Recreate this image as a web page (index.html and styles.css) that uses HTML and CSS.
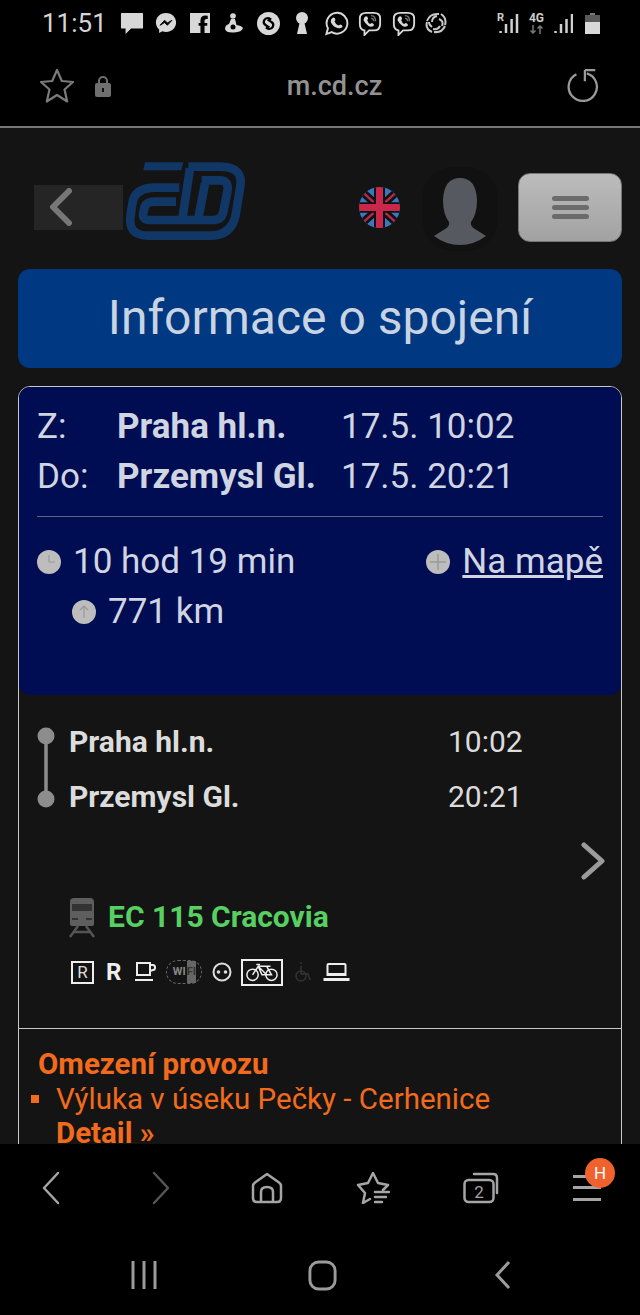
FILE: index.html
```html
<!DOCTYPE html>
<html lang="cs">
<head>
<meta charset="utf-8">
<title>Informace o spojení</title>
<link rel="stylesheet" href="styles.css">
</head>
<body>
<div class="phone">
  <header class="status">
    <span class="clock">11:51</span>
    <div class="notifs">
      <svg width="24" height="23" viewBox="0 0 26 25"><path class="fill" d="M2 1h22q1 0 1 1v15q0 1-1 1H12l-6 6v-6H2q-1 0-1-1V2q0-1 1-1z"/></svg>
      <svg width="22" height="22" viewBox="0 0 24 24"><path class="fill" d="M12 1C5 1 1 6 1 11.500c0 3 1.200 5.500 3.500 7.500v4l3.500-2q2 .7 4 .7c7 0 11-5 11-10.200S19 1 12 1z"/><path d="M5.500 14.500l5-5.500 3 3 5-3-5 5.500-3-3z" fill="#000" stroke="#000"/></svg>
      <svg width="20" height="20" viewBox="0 0 22 22"><path class="fill" d="M0 0h22v22h-6v-8h3v-3h-3V8.500q0-2 2-2h1.500V3q-8-1.200-8 5v3h-2v3h2v8H0z"/></svg>
      <svg width="18" height="20" viewBox="0 0 18 20"><circle class="fill" cx="8" cy="3" r="2.800"/><path class="fill" d="M6 6h4l1.500 6q5 .5 6.500 3-1 4-9 4.500T0 16q0-4 4-5z"/><circle cx="8" cy="14" r="2.500" fill="#000"/></svg>
      <svg width="23" height="23" viewBox="0 0 26 26"><circle class="fill" cx="13" cy="13" r="13"/><path d="M16 8.500l-2.500-1.500Q10 6 8 9.500q-1.500 3.500 2 5.500l4 2.500M10 17.500l2.500 1.500Q16 20 18 16.500q1.500-3.500-2-5.500l-4-2.500" fill="none" stroke="#000" stroke-width="2.500"/></svg>
      <svg width="14" height="22" viewBox="0 0 14 22"><circle class="fill" cx="7" cy="6" r="6"/><path class="fill" d="M5 9h4l3 13H2z"/></svg>
      <svg width="25" height="25" viewBox="0 0 26 26"><path d="M2.500 24l1.600-6A10.800 10.800 0 1 1 8 22z" fill="none" stroke="#d8d8d8" stroke-width="2"/><path class="fill" d="M9 7q2-1 3 2l-1 2q1 3 4 4l2-1q3 1 2 3-3 2-7 0t-5-6q0-3 2-4z"/></svg>
      <svg width="24" height="25" viewBox="0 0 26 27"><path d="M7 21q-5-1-5-7V8q0-6 7-6h8q7 0 7 6v6q0 7-7 7h-5l-5 5z" fill="none" stroke="#d8d8d8" stroke-width="2"/><path class="fill" d="M8 6q2-1 3 2l-1 2q1 3 3 4l2-1q3 1 2 3-3 2-6 0t-5-6q0-3 2-4z"/><path d="M14 5q5 0 5 6M14 8q3 0 3 3" fill="none" stroke="#777" stroke-width="1.500"/></svg>
      <svg width="24" height="25" viewBox="0 0 26 27"><path d="M7 21q-5-1-5-7V8q0-6 7-6h8q7 0 7 6v6q0 7-7 7h-5l-5 5z" fill="none" stroke="#d8d8d8" stroke-width="2"/><path class="fill" d="M8 6q2-1 3 2l-1 2q1 3 3 4l2-1q3 1 2 3-3 2-6 0t-5-6q0-3 2-4z"/><path d="M14 5q5 0 5 6M14 8q3 0 3 3" fill="none" stroke="#777" stroke-width="1.500"/></svg>
      <svg width="22" height="22" viewBox="0 0 22 22"><g fill="none" stroke="#c8c8c8" stroke-width="2"><path d="M2 9Q5 1 14 2M16 2q6 4 4 11M20 14q-3 7-11 6M7 20Q0 17 2 10M7 10Q7 5 12 4M14 7q5 2 3 7M15 14q-2 4-7 3M7 15q-3-2-3-5"/></g></svg>
    </div>
    <div class="sys">
      <div class="net"><span class="net-l">R</span><svg width="22" height="20" viewBox="0 0 22 20"><path class="bars" d="M3.600 19v-2M9 19v-9M14.600 19V5M20 19V0"/></svg></div>
      <div class="net-4g"><span class="net-t">4G</span><svg width="15" height="9" viewBox="0 0 15 9"><path d="M4 0v8M1.500 5.500L4 8l2.500-2.500M11 9V1M8.500 3.500L11 1l2.500 2.500" fill="none" stroke="#777" stroke-width="1.500"/></svg></div>
      <svg width="19" height="20" viewBox="0 0 19 20"><path class="bars" d="M1.500 19v-2M7 19v-9M12.500 19V5M18 19V0"/></svg>
      <svg class="batt" width="15" height="21" viewBox="0 0 15 21"><path d="M5 0h5v2H5z" fill="#777"/><path d="M0 2h15v7H0z" fill="#5a5a5a"/><path class="fill" d="M0 9h15v12H0z"/></svg>
    </div>
  </header>

  <div class="urlbar">
    <svg class="star" width="36" height="36" viewBox="0 0 36 36"><path d="M18 2l4.800 11 11.200 1-8.500 7.500 2.700 12L18 27l-10.200 6.500 2.700-12L2 14l11.200-1z" fill="none" stroke="#7b7b7b" stroke-width="2.200" stroke-linejoin="round"/></svg>
    <svg class="lock" width="16" height="22" viewBox="0 0 16 22"><path d="M4 9V6a4 4 0 0 1 8 0v3" fill="none" stroke="#707070" stroke-width="2"/><rect y="8" width="16" height="14" rx="2" fill="#707070"/><rect x="7" y="13" width="2" height="4" fill="#111"/></svg>
    <span class="host">m.cd.cz</span>
    <svg class="reload" width="32" height="34" viewBox="0 0 34 36"><path d="M21 4.500A15 15 0 1 1 10 5.500M19 1h11M19 1v12" fill="none" stroke="#9a9a9a" stroke-width="2.400"/></svg>
  </div>

  <main class="page">
    <div class="site-head">
      <div class="back"><svg width="26" height="38" viewBox="0 0 26 38"><path d="M22 3L6 19l16 16" fill="none" stroke="#777" stroke-width="6" stroke-linecap="round" stroke-linejoin="round"/></svg></div>
      <svg class="logo" width="130" height="92" viewBox="0 0 390 276"><path class="logo-f" d="M75 22h115l-6 24H70z"/><g class="logo-s"><path d="M205 35H300Q374 35 360 100L347 180Q334 242 270 242H85Q22 242 32 180L38 140Q48 98 105 98H178"/><path d="M245 76H300Q328 76 322 110L310 170Q305 195 280 195H90Q64 195 70 172L74 155Q80 140 105 140H168"/><path d="M210 40L188 185M255 85L236 185"/></g></svg>
      <div class="head-right">
        <svg class="flag" width="41" height="41" viewBox="0 0 41 42" preserveAspectRatio="none"><defs><clipPath id="ov"><ellipse cx="20.500" cy="21" rx="20.500" ry="21"/></clipPath></defs><g clip-path="url(#ov)"><rect width="41" height="42" fill="#3a78bd"/><path d="M0 2l41 38M41 2L0 40" stroke="#111" stroke-width="8"/><path d="M0 2l41 38M41 2L0 40" stroke="#b5284a" stroke-width="2.500"/><path d="M20.500 0v42M0 21h41" stroke="#111" stroke-width="11"/><path d="M20.500 0v42M0 21h41" stroke="#c9284c" stroke-width="7"/></g></svg>
        <svg class="avatar" width="76" height="84" viewBox="-10 0 76 84"><rect x="-10" y="0" width="76" height="84" rx="32" fill="#111"/><path d="M28 11q16 0 17 22 0 14-6 22-1 4 4 7l11 7Q42 78 28 78T2 69l11-7q5-3 4-7-6-8-6-22 1-22 17-22z" fill="#565a60"/></svg>
        <div class="menu-btn"><span></span><span></span><span></span></div>
      </div>
    </div>

    <h1 class="title">Informace o spojení</h1>

    <section class="card">
      <div class="summary">
        <div class="route">
          <span>Z:</span><strong>Praha hl.n.</strong><span>17.5. 10:02</span>
          <span>Do:</span><strong>Przemysl Gl.</strong><span>17.5. 20:21</span>
        </div>
        <hr class="rule">
        <div class="meta">
          <div class="meta-list">
            <div class="meta-item"><svg width="24" height="24" viewBox="0 0 24 24"><circle cx="12" cy="12" r="12" fill="#bdbdbd"/><path d="M12 5v7h6" fill="none" stroke="#999" stroke-width="1.200"/></svg>10 hod 19 min</div>
            <div class="meta-item meta-sub"><svg width="24" height="24" viewBox="0 0 24 24"><circle cx="12" cy="12" r="12" fill="#bdbdbd"/><path d="M12 18V6M8 10l4-4 4 4" fill="none" stroke="#999" stroke-width="1.200"/></svg>771 km</div>
          </div>
          <div class="meta-item"><svg width="24" height="24" viewBox="0 0 24 24"><circle cx="12" cy="12" r="12" fill="#bdbdbd"/><path d="M12 4v16M4 12h16" stroke="#999" stroke-width="1.500"/></svg><a class="map" href="#">Na mapě</a></div>
        </div>
      </div>

      <div class="conn">
        <div class="stops">
          <svg class="line" width="18" height="81" viewBox="0 0 18 81"><path d="M9 8v64" stroke="#8d8d8d" stroke-width="3.500"/><circle cx="9" cy="9" r="8.500" fill="#8d8d8d"/><circle cx="9" cy="72" r="8.500" fill="#8d8d8d"/></svg>
          <div class="stop-list">
            <div class="stop"><strong>Praha hl.n.</strong><span>10:02</span></div>
            <div class="stop"><strong>Przemysl Gl.</strong><span>20:21</span></div>
          </div>
        </div>
        <div class="more"><svg width="26" height="38" viewBox="0 0 26 38"><path d="M4 3l18 16L4 35" fill="none" stroke="#9b9b9b" stroke-width="5" stroke-linecap="round" stroke-linejoin="round"/></svg></div>
        <div class="train">
          <svg width="26" height="42" viewBox="0 0 26 42"><path d="M5 1h16q4 0 4 4v22q0 2-3 2H4q-3 0-3-2V5q0-4 4-4z" fill="#5e5e5e"/><path d="M3 7h20v7H3z" fill="#333"/><path d="M3 21h6v2H3zM17 21h6v2h-6z" fill="#333"/><path d="M9 29L1 40M17 29l8 11M5 35h16" stroke="#555" stroke-width="2.500" fill="none"/></svg>
          <span class="train-name">EC 115 Cracovia</span>
        </div>
        <div class="amen">
          <span class="a-r">R</span>
          <span class="a-rb">R</span>
          <svg width="22" height="20" viewBox="0 0 22 20"><path d="M3 1h13v12H3zM16 3h3q2 0 2 2.500T19 8l-3 1M1 18h18" fill="none" stroke="#eee" stroke-width="2"/></svg>
          <span class="a-wifi"><span>WI</span><span class="fi">FI</span></span>
          <svg class="a-socket" width="20" height="20" viewBox="0 0 20 20"><circle cx="10" cy="10" r="8.500" fill="none" stroke="#ddd" stroke-width="2"/><circle cx="6.500" cy="10" r="1.800" fill="#ddd"/><circle cx="13.500" cy="10" r="1.800" fill="#ddd"/></svg>
          <span class="a-bike"><svg width="34" height="20" viewBox="0 0 36 20"><g fill="none" stroke="#eee" stroke-width="1.600"><circle cx="8" cy="13" r="6"/><circle cx="28" cy="13" r="6"/><path d="M8 13l6-9 9 9h5l-5-9h-9M12 2h4M23 4h4M14 4l4 9h5"/></g></svg></span>
          <svg width="20" height="24" viewBox="0 0 20 24"><g fill="none" stroke="#333" stroke-width="1.500"><path d="M8 2v2M8 6v8h7l2 6"/><circle cx="8" cy="16" r="5"/></g></svg>
          <svg width="27" height="20" viewBox="0 0 26 20"><path d="M5 1h16q2 0 2 2v11H3V3q0-2 2-2zM0 16h26v3H0z" fill="#eee"/><rect x="5" y="3" width="16" height="8" fill="#141414"/></svg>
        </div>
      </div>

      <div class="notice">
        <h2 class="notice-h">Omezení provozu</h2>
        <div class="notice-item"><span class="bullet"></span><span>Výluka v úseku Pečky - Cerhenice</span></div>
        <a class="detail" href="#">Detail »</a>
      </div>
    </section>
  </main>

  <nav class="toolbar">
    <svg width="20" height="34" viewBox="0 0 20 34"><path d="M17 2L3 17l14 15" class="tb"/></svg>
    <svg width="20" height="34" viewBox="0 0 20 34"><path d="M3 2l14 15L3 32" class="tb dim"/></svg>
    <svg width="32" height="32" viewBox="0 0 32 32"><path d="M2 26V14Q2 12 4 10.500L16 2l12 8.500q2 1.500 2 3.500v12q0 4-4 4H6q-4 0-4-4zM10 30V20q0-5 6-5t6 5v10" class="tb"/></svg>
    <svg width="34" height="32" viewBox="0 0 34 32"><path d="M17 1l5 10 10 2-5 5M17 1l-5 10-10 2 7 8-2 10 7-4" class="tb"/><path d="M19 20h14M19 25h11M19 30h7" class="tb"/></svg>
    <svg width="36" height="32" viewBox="0 0 36 32"><rect x="1.500" y="8" width="29" height="22" rx="4" class="tb"/><path d="M11 2h19q4 0 4 4v15" class="tb"/><text x="16" y="26" class="tab-n">2</text></svg>
    <div class="hamb"><span></span><span></span><span></span><b class="badge">H</b></div>
  </nav>

  <nav class="sysnav">
    <svg width="30" height="30" viewBox="0 0 30 30"><path d="M4 1v28M15 1v28M26 1v28" fill="none" stroke="#9b9b9b" stroke-width="3"/></svg>
    <svg width="31" height="31" viewBox="0 0 30 32"><rect x="2" y="2" width="26" height="28" rx="9" fill="none" stroke="#9b9b9b" stroke-width="3"/></svg>
    <svg width="18" height="30" viewBox="0 0 18 30"><path d="M15 2L3 15l12 13" fill="none" stroke="#9b9b9b" stroke-width="3"/></svg>
  </nav>
</div>
</body>
</html>
```

FILE: styles.css
```css
* { box-sizing: border-box; }
html, body { margin: 0; padding: 0; background: #000; }
body { font-family: Roboto, "Liberation Sans", sans-serif; }
svg { display: block; flex: none; }
.fill { fill: #d8d8d8; }
.bars { fill: none; stroke: #d0d0d0; stroke-width: 2.500; }

.phone { width: 640px; height: 1315px; display: flex; flex-direction: column; overflow: hidden; background: #000; }

.status { height: 50px; flex: none; display: flex; align-items: center; padding: 0 40px 4px 42px; color: #d8d8d8; }
.clock { font-size: 26px; width: 73px; color: #d4d4d4; }
.notifs { display: grid; grid-template-columns: repeat(9, 34px) 30px; justify-items: center; align-items: center; }
.sys { display: flex; align-items: flex-end; gap: 10px; margin-left: auto; height: 22px; }
.net { position: relative; }
.net-l { position: absolute; left: 0; top: -2px; font-size: 11px; line-height: 11px; font-weight: 700; color: #ccc; }
.net-4g { display: flex; flex-direction: column; align-items: center; gap: 1px; }
.net-t { font-size: 12px; font-weight: 700; color: #ccc; line-height: 12px; }
.batt { margin-left: 2px; }

.urlbar { height: 78px; flex: none; display: flex; align-items: center; padding: 0 41px 5px 39px; border-bottom: 2px solid #777; }
.lock { margin-left: 20px; }
.host { flex: 1; text-align: center; font-size: 27px; font-weight: 500; color: #929292; padding-right: 9px; }

.page { flex: 1; min-height: 0; overflow: hidden; background: #141414; padding: 0 18px; }
.site-head { height: 141px; display: flex; align-items: flex-start; padding-top: 27px; }
.back { width: 89px; height: 45px; margin: 30px 0 0 16px; background: #252525; padding: 3px 0 0 13px; flex: none; }
.logo { margin-left: -3px; }
.logo-f { fill: #103766; }
.logo-s { fill: none; stroke: #103766; stroke-width: 26; }
.head-right { margin-left: auto; display: flex; align-items: flex-start; }
.flag { margin-top: 32px; }
.avatar { margin: 12px 0 0 22px; }
.menu-btn { width: 104px; height: 69px; margin: 18px 0 0 20px; border-radius: 12px; background: linear-gradient(#bcbcbc, #a2a2a2); border: 1px solid #777; display: flex; flex-direction: column; justify-content: center; align-items: center; gap: 4px; }
.menu-btn span { width: 37px; height: 5px; border-radius: 3px; background: #6b6b6b; }

.title { margin: 0; height: 99px; border-radius: 12px; background: #003882; color: #c9d3e2; font-size: 48px; font-weight: 400; text-align: center; line-height: 97px; }

.card { margin-top: 18px; border: 1px solid #c8c8c8; border-radius: 12px; height: 800px; background: #141414; }
.summary { height: 308px; border-radius: 11px; background: #000d52; color: #d0d5e2; padding: 15px 18px 0; font-size: 35px; }
.route { display: grid; grid-template-columns: 80px 224px 1fr; line-height: 50px; }
.rule { border: 0; border-top: 1px solid #5b6488; margin: 14px 0 0; }
.meta { display: flex; justify-content: space-between; align-items: flex-start; margin-top: 20px; }
.meta-list { display: flex; flex-direction: column; }
.meta-item { display: flex; align-items: center; gap: 12px; line-height: 50px; }
.meta-sub { margin-left: 35px; }
.map { color: #d0d5e2; }

.conn { padding: 31px 19px 0; position: relative; height: 333px; }
.stops { display: flex; gap: 14px; color: #dcdcdc; }
.line { margin-left: -1px; margin-top: 1px; }
.stop-list { flex: 1; display: flex; flex-direction: column; margin-top: -12px; }
.stop { display: grid; grid-template-columns: 379px 1fr; font-size: 30px; line-height: 55px; height: 55px; }
.more { position: absolute; right: 15px; top: 147px; }
.train { display: flex; align-items: center; gap: 13px; margin: 73px 0 0 31px; }
.train-name { color: #57cf61; font-size: 30px; font-weight: 700; padding-bottom: 4px; }
.amen { display: flex; align-items: center; gap: 10px; margin: 18px 0 0 33px; height: 30px; }
.a-r { width: 23px; height: 23px; border: 2px solid #eee; color: #ddd; font-size: 17px; line-height: 19px; text-align: center; }
.a-rb { color: #eee; font-size: 24px; font-weight: 700; line-height: 24px; margin: 0 3px 0 2px; }
.a-wifi { display: flex; width: 36px; height: 24px; border-radius: 12px; border: 1px dashed #666; font-size: 11px; font-weight: 700; color: #888; line-height: 22px; justify-content: center; gap: 1px; }
.fi { background: #666; color: #333; }
.a-socket { margin-right: -1px; }
.a-bike { border: 2px solid #eee; padding: 1px 2px; width: 42px; height: 27px; flex: none; }

.notice { border-top: 1px solid #c8c8c8; padding: 19px 19px 0; color: #f26b1d; font-size: 29.500px; }
.notice-h { margin: 0; font-size: 29.500px; font-weight: 700; line-height: 32px; }
.notice-item { display: flex; align-items: center; gap: 17px; line-height: 38px; }
.bullet { width: 8px; height: 8px; background: #f26b1d; margin-left: -7px; }
.detail { display: block; color: #f26b1d; font-weight: 700; text-decoration: none; line-height: 22px; margin: 4px 0 0 18px; }

.toolbar { height: 93px; flex: none; display: grid; grid-template-columns: 110px 100px 105px 107px 110px 1fr; align-items: center; padding: 0 0 6px 41px; background: #000; }
.tb { fill: none; stroke: #a5a5a5; stroke-width: 2.500; stroke-linecap: round; stroke-linejoin: round; }
.dim { stroke: #555; }
.tab-n { font-family: Roboto, sans-serif; font-size: 17px; fill: #a5a5a5; text-anchor: middle; }
.hamb { width: 28px; height: 26px; display: flex; flex-direction: column; justify-content: space-between; position: relative; }
.hamb span { height: 3px; background: #a5a5a5; display: block; }
.badge { position: absolute; left: 12px; top: -17px; width: 30px; height: 30px; border-radius: 50%; background: #f0622d; color: #fff; font-size: 17px; font-weight: 400; text-align: center; line-height: 30px; }

.sysnav { height: 78px; flex: none; display: grid; grid-template-columns: 178px 187px 1fr; align-items: start; padding: 23px 0 0 129px; background: #000; }
```
